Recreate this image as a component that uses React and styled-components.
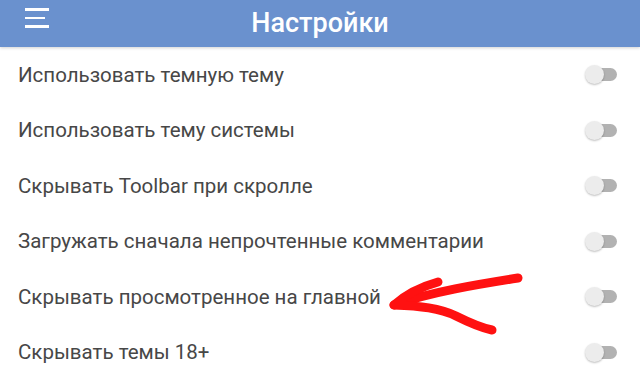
import styled, { createGlobalStyle } from "styled-components";

const Global = createGlobalStyle`
body {
  margin: 0;
  background: #FFFFFF;
  font-family: Roboto, "Noto Sans", sans-serif;
}
`;

const Screen = styled.div`
position: relative;
width: 640px;
height: 392px;
overflow: hidden;
background: #FFFFFF;
`;

const TopBar = styled.div`
height: 47px;
background: #6A91CE;
display: flex;
align-items: center;
padding: 0 25px;
box-shadow: 0 1px 3px rgba(0, 0, 0, 0.18);
position: relative;
z-index: 1;
`;

const Title = styled.div`
flex: 1;
text-align: center;
color: #FFFFFF;
font-size: 27px;
font-weight: 500;
margin-right: 24px;
margin-top: -1px;
`;

const Menu = styled.div`
width: 24px;
display: flex;
flex-direction: column;
gap: 6px;
margin-top: -11px;
`;

const MenuLine = styled.div`
height: 2.5px;
width: ${props => props.w || "24px"};
background: #FFFFFF;
`;

const List = styled.div`
display: flex;
flex-direction: column;
`;

const Row = styled.div`
height: 55.5px;
display: flex;
align-items: center;
justify-content: space-between;
padding: 0 23px 0 18px;
`;

const Label = styled.div`
font-size: 20.5px;
color: #474747;
`;

const Track = styled.div`
position: relative;
width: 31px;
height: 13px;
border-radius: 7px;
background: #B2B2B2;
`;

const Thumb = styled.div`
position: absolute;
left: -1px;
top: -3px;
width: 19px;
height: 19px;
border-radius: 50%;
background: #ECECEC;
box-shadow: 0 1px 2px rgba(0, 0, 0, 0.25);
`;

const Arrow = styled.svg`
position: absolute;
left: 0;
top: 0;
pointer-events: none;
`;

const items = [
  "Использовать темную тему",
  "Использовать тему системы",
  "Скрывать Toolbar при скролле",
  "Загружать сначала непрочтенные комментарии",
  "Скрывать просмотренное на главной",
  "Скрывать темы 18+",
];

function Switch() {
  return <Track><Thumb /></Track>;
}

export default function App() {
  return <Screen>
    <Global />
    <TopBar>
      <Menu>
        <MenuLine />
        <MenuLine w="20px" />
        <MenuLine />
      </Menu>
      <Title>Настройки</Title>
    </TopBar>
    <List>
      {items.map(t => <Row key={t}>
        <Label>{t}</Label>
        <Switch />
      </Row>)}
    </List>
    <Arrow width="640" height="392">
      <g fill="none" stroke="#FF1111" strokeWidth="9" strokeLinecap="round" strokeLinejoin="round">
        <path d="M518 278 C 480 284, 430 292, 394 305" />
        <path d="M438 282 C 420 287, 404 296, 394 305 C 420 306, 440 308, 456 316 C 470 323, 482 328, 492 330" />
      </g>
    </Arrow>
  </Screen>;
}
